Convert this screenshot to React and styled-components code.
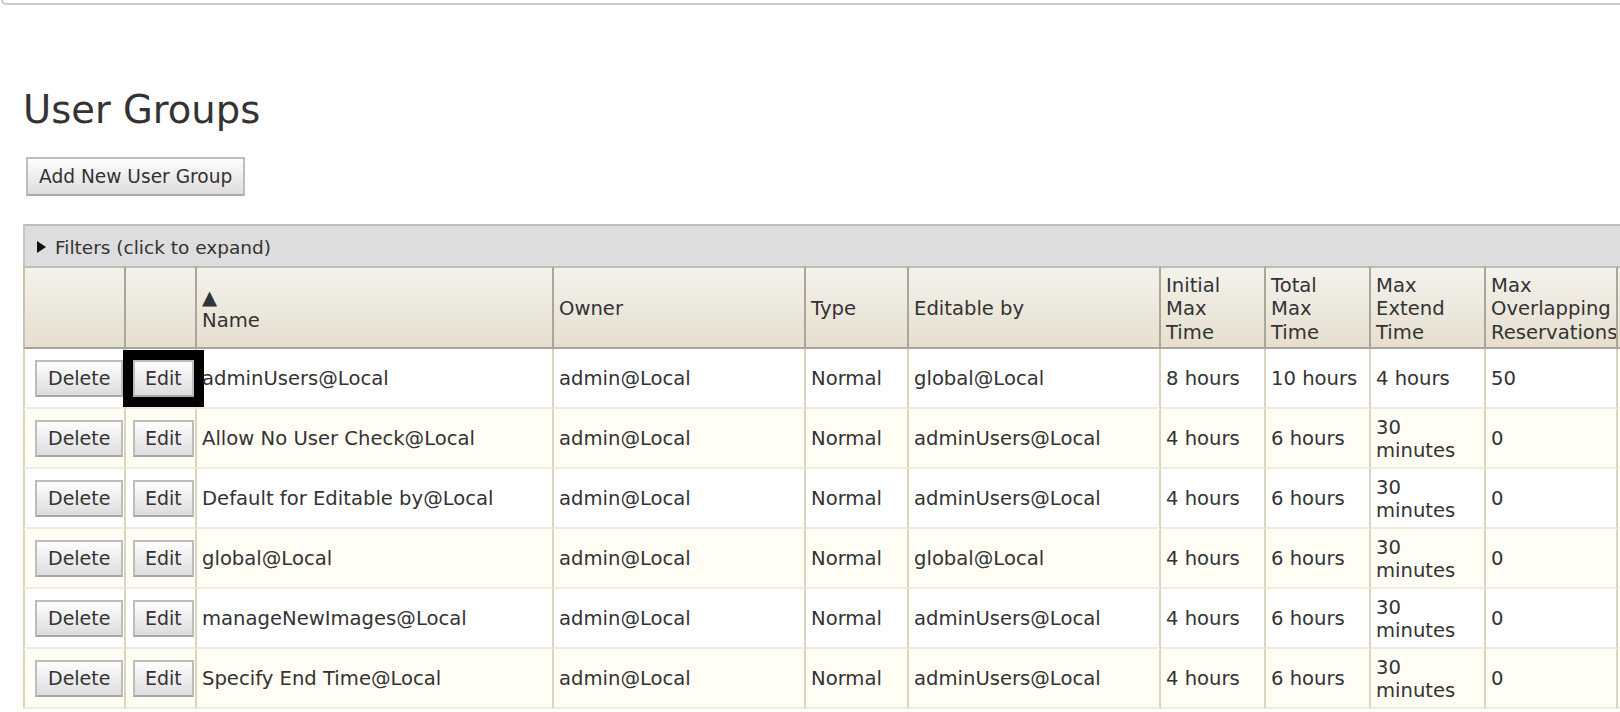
import React from 'react';
import styled, { createGlobalStyle } from 'styled-components';

const GlobalStyle = createGlobalStyle`
  html, body {
    margin: 0;
    padding: 0;
    background: #fff;
  }
  body {
    font-family: "DejaVu Sans", Verdana, sans-serif;
    color: #333;
    overflow: hidden;
  }
  * {
    box-sizing: border-box;
  }
`;

const Page = styled.div`
  width: 1620px;
  height: 712px;
  overflow: hidden;
`;

const TopFrame = styled.div`
  height: 5px;
  margin-left: 1px;
  border-left: 2px solid #cbcbcb;
  border-bottom: 2px solid #cbcbcb;
  border-bottom-left-radius: 6px;
`;

const Content = styled.div`
  padding-left: 23px;
`;

const Title = styled.h1`
  margin: 82px 0 0;
  font-size: 38.5px;
  font-weight: normal;
  line-height: normal;
  color: #333;
`;

const Toolbar = styled.div`
  margin: 25px 0 28px 3px;
`;

const Button = styled.button`
  font-family: inherit;
  font-size: ${(p) => p.$size || 19}px;
  color: #333;
  height: ${(p) => p.$h || 37}px;
  padding: 0 ${(p) => p.$px || 11}px;
  border: 2px solid #bdbdbd;
  border-bottom-color: #a8a8a8;
  border-radius: 0;
  background: linear-gradient(#fefefe, #dddddd);
  white-space: nowrap;
  cursor: pointer;
  outline: ${(p) => (p.$focused ? '10px solid #000' : 'none')};
`;

const Grid = styled.div`
  width: 1744px;
`;

const FilterBar = styled.div`
  height: 42px;
  display: flex;
  align-items: center;
  gap: 9px;
  padding: 2px 0 0 12px;
  background: #dddddd;
  border-top: 2px solid #bdbdbd;
  border-left: 2px solid #c4c4c4;
  font-size: 18.5px;
`;

const Caret = styled.span`
  width: 0;
  height: 0;
  border-top: 6px solid transparent;
  border-bottom: 6px solid transparent;
  border-left: 9px solid #111;
`;

const Table = styled.table`
  table-layout: fixed;
  border-collapse: separate;
  border-spacing: 0;
  width: 1744px;
  font-size: 19.6px;
`;

const HeadCell = styled.th`
  height: 83px;
  padding: 3px 10px 0 5px;
  text-align: left;
  font-weight: normal;
  vertical-align: middle;
  line-height: 23.5px;
  overflow: hidden;
  background: linear-gradient(#f4f2ec, #e6dfcf);
  border-top: 2px solid #bdbdbd;
  border-bottom: 2px solid #a9a699;
  border-right: 2px solid #aaa698;
  &:first-child {
    border-left: 2px solid #c9c3b0;
  }
`;

const SortMark = styled.span`
  display: block;
`;

const Row = styled.tr`
  background: ${(p) => (p.$alt ? '#fffdf4' : '#ffffff')};
`;

const Cell = styled.td`
  height: 60px;
  padding: ${(p) => p.$pt ?? 3}px ${(p) => p.$px ?? 5}px 0 ${(p) => p.$pl ?? 5}px;
  vertical-align: middle;
  line-height: 22.5px;
  white-space: ${(p) => (p.$nowrap ? 'nowrap' : 'normal')};
  overflow: ${(p) => (p.$clip ? 'hidden' : 'visible')};
  border-right: 2px solid #dbd4bf;
  border-bottom: 2px solid #efebdf;
  &:first-child {
    border-left: 2px solid #dbd4bf;
  }
`;

const columns = [103, 71, 357, 252, 103, 252, 105, 105, 115, 132, 149];

const headers = [
  '',
  '',
  'Name',
  'Owner',
  'Type',
  'Editable by',
  'Initial Max Time',
  'Total Max Time',
  'Max Extend Time',
  'Max Overlapping Reservations',
  '',
];

const groups = [
  ['adminUsers@Local', 'admin@Local', 'Normal', 'global@Local', '8 hours', '10 hours', '4 hours', '50'],
  ['Allow No User Check@Local', 'admin@Local', 'Normal', 'adminUsers@Local', '4 hours', '6 hours', '30 minutes', '0'],
  ['Default for Editable by@Local', 'admin@Local', 'Normal', 'adminUsers@Local', '4 hours', '6 hours', '30 minutes', '0'],
  ['global@Local', 'admin@Local', 'Normal', 'global@Local', '4 hours', '6 hours', '30 minutes', '0'],
  ['manageNewImages@Local', 'admin@Local', 'Normal', 'adminUsers@Local', '4 hours', '6 hours', '30 minutes', '0'],
  ['Specify End Time@Local', 'admin@Local', 'Normal', 'adminUsers@Local', '4 hours', '6 hours', '30 minutes', '0'],
];

const App = () => {
  return (
    <>
      <GlobalStyle />
      <Page>
        <TopFrame />
        <Content>
          <Title>User Groups</Title>
          <Toolbar>
            <Button $size={18.6} $h={39} $px={11}>
              Add New User Group
            </Button>
          </Toolbar>
          <Grid>
            <FilterBar>
              <Caret />
              <span>Filters (click to expand)</span>
            </FilterBar>
            <Table>
              <colgroup>
                {columns.map((w, i) => (
                  <col key={i} style={{ width: w }} />
                ))}
              </colgroup>
              <thead>
                <tr>
                  {headers.map((h, i) => (
                    <HeadCell key={i}>
                      {h === 'Name' && <SortMark>▲</SortMark>}
                      {h}
                    </HeadCell>
                  ))}
                </tr>
              </thead>
              <tbody>
                {groups.map((g, i) => (
                  <Row key={g[0]} $alt={i % 2 === 1}>
                    <Cell $pt={0} $pl={10} $px={0}>
                      <Button>Delete</Button>
                    </Cell>
                    <Cell $pt={0} $pl={7} $px={0} $clip={i !== 0}>
                      <Button $px={10} $focused={i === 0}>
                        Edit
                      </Button>
                    </Cell>
                    {g.map((v, j) => (
                      <Cell key={j} $nowrap={j === 5}>
                        {v}
                      </Cell>
                    ))}
                    <Cell />
                  </Row>
                ))}
              </tbody>
            </Table>
          </Grid>
        </Content>
      </Page>
    </>
  );
};

export default App;
